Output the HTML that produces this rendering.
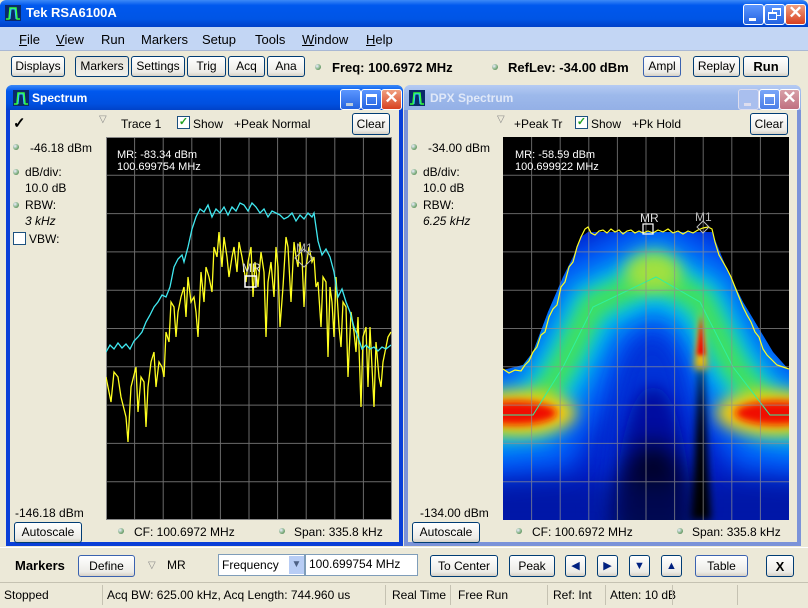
<!DOCTYPE html>
<html><head><meta charset="utf-8">
<style>
*{box-sizing:border-box;margin:0;padding:0}
body{width:808px;height:608px;overflow:hidden;background:#ece9d8;font-family:"Liberation Sans",sans-serif;font-size:12px;color:#000;position:relative}
.a{position:absolute}
.btn{position:absolute;border:1px solid #003c74;border-radius:3px;background:linear-gradient(#fff,#ecebe6 80%,#d6d0c5);font-size:12px;text-align:center;line-height:19px;height:21px}
.btn.sel{background:linear-gradient(#e4e2da,#f0efe9)}
.dot{position:absolute;width:6px;height:6px;border-radius:50%;background:radial-gradient(circle at 35% 35%,#eef,#7a7 60%,#464)}
.tb{position:absolute;height:25px;border-radius:6px 6px 0 0}
.wb{position:absolute;width:21px;height:21px;border:1px solid #fff;border-radius:3px}
</style></head><body>
<div class="a" style="left:0;top:0;width:808px;height:27px;background:linear-gradient(#3d8af7,#0058ee 20%,#0055e5 70%,#0040c8);border-radius:6px 6px 0 0"></div>
<svg class="a" style="left:5px;top:5px" width="16" height="16"><rect width="16" height="16" fill="#0a2a6a"/><path d="M1,14 L4,14 L5,3 L11,3 L12,14 L15,14" stroke="#3f3" stroke-width="1.5" fill="none"/><path d="M5,14 L6,4 L10,4 L11,14" stroke="#3cf" fill="none"/></svg>
<div class="a" style="left:26px;top:5px;color:#fff;font-weight:bold;font-size:13px">Tek RSA6100A</div>
<div class="wb" style="left:743px;top:4px;background:linear-gradient(#5b96ff,#2463e0)"><div class="a" style="left:5px;top:13px;width:7px;height:3px;background:#fff"></div></div>
<div class="wb" style="left:764px;top:4px;background:linear-gradient(#5b96ff,#2463e0)"><div class="a" style="left:7px;top:3px;width:9px;height:8px;border:1px solid #fff;border-top-width:2px"></div><div class="a" style="left:3px;top:7px;width:9px;height:8px;border:1px solid #fff;border-top-width:2px;background:#3a7af0"></div></div>
<div class="wb" style="left:785px;top:4px;background:linear-gradient(#f0a080,#d84020)"><div class="a" style="left:0;top:-2px;width:19px;color:#fff;font-weight:bold;font-size:17px;text-align:center">✕</div></div>
<div class="a" style="left:0;top:27px;width:808px;height:24px;background:#c3d6f4;border-bottom:1px solid #a9b8d4"></div>
<div class="a" style="left:19px;top:32px;font-size:13px"><u>F</u>ile</div>
<div class="a" style="left:56px;top:32px;font-size:13px"><u>V</u>iew</div>
<div class="a" style="left:101px;top:32px;font-size:13px">Run</div>
<div class="a" style="left:141px;top:32px;font-size:13px">Markers</div>
<div class="a" style="left:202px;top:32px;font-size:13px">Setup</div>
<div class="a" style="left:255px;top:32px;font-size:13px">Tools</div>
<div class="a" style="left:302px;top:32px;font-size:13px"><u>W</u>indow</div>
<div class="a" style="left:366px;top:32px;font-size:13px"><u>H</u>elp</div>
<div class="btn" style="left:11px;top:56px;width:54px">Displays</div>
<div class="btn sel" style="left:75px;top:56px;width:54px">Markers</div>
<div class="btn" style="left:131px;top:56px;width:54px">Settings</div>
<div class="btn" style="left:187px;top:56px;width:39px">Trig</div>
<div class="btn" style="left:228px;top:56px;width:37px">Acq</div>
<div class="btn" style="left:267px;top:56px;width:38px">Ana</div>
<div class="dot" style="left:315px;top:64px"></div>
<div class="a" style="left:332px;top:60px;font-weight:bold;font-size:13px">Freq: 100.6972 MHz</div>
<div class="dot" style="left:492px;top:64px"></div>
<div class="a" style="left:508px;top:60px;font-weight:bold;font-size:13px">RefLev: -34.00 dBm</div>
<div class="btn" style="left:643px;top:56px;width:38px;border-color:#3a62b0">Ampl</div>
<div class="btn" style="left:693px;top:56px;width:47px">Replay</div>
<div class="btn" style="left:743px;top:56px;width:46px;font-weight:bold;font-size:13px">Run</div>

<div class="a" style="left:6px;top:85px;width:397px;height:461px;background:#0a3fd8;border-radius:7px 7px 0 0"></div>
<div class="tb" style="left:6px;top:85px;width:397px;background:linear-gradient(#3d8af7,#0058ee 25%,#0050e0 75%,#0042c8)"></div>
<div class="a" style="left:10px;top:110px;width:389px;height:432px;background:#ece9d8"></div>
<svg class="a" style="left:13px;top:90px" width="16" height="16"><rect width="16" height="16" fill="#0a2a6a"/><path d="M1,14 L4,14 L5,3 L11,3 L12,14 L15,14" stroke="#3f3" stroke-width="1.5" fill="none"/><path d="M5,14 L6,4 L10,4 L11,14" stroke="#3cf" fill="none"/></svg>
<div class="a" style="left:32px;top:91px;color:#fff;font-weight:bold;font-size:12px">Spectrum</div>
<div class="wb" style="left:340px;top:89px;background:linear-gradient(#5b96ff,#2463e0)"><div class="a" style="left:5px;top:13px;width:7px;height:3px;background:#bcd"></div></div>
<div class="wb" style="left:361px;top:89px;background:linear-gradient(#5b96ff,#2463e0)"><div class="a" style="left:4px;top:4px;width:11px;height:11px;border:1px solid #fff;border-top-width:3px"></div></div>
<div class="wb" style="left:381px;top:89px;background:linear-gradient(#f0a080,#d84020)"><div class="a" style="left:0;top:-2px;width:19px;color:#fff;font-weight:bold;font-size:17px;text-align:center">✕</div></div>
<div class="a" style="left:13px;top:114px;font-size:15px;font-weight:bold">✓</div>
<div class="a" style="left:99px;top:114px;color:#888;font-size:10px">▽</div>
<div class="a" style="left:121px;top:117px">Trace 1</div>
<div class="a" style="left:177px;top:116px;width:13px;height:13px;border:1px solid #1c5180;background:#fff;color:#21a121;font-size:11px;line-height:11px;text-align:center;font-weight:bold">✓</div>
<div class="a" style="left:193px;top:117px">Show</div>
<div class="a" style="left:234px;top:117px">+Peak Normal</div>
<div class="btn" style="left:352px;top:113px;width:38px;height:22px;line-height:20px">Clear</div>
<div class="dot" style="left:13px;top:144px"></div><div class="a" style="left:30px;top:141px">-46.18 dBm</div>
<div class="dot" style="left:13px;top:169px"></div><div class="a" style="left:25px;top:165px">dB/div:</div>
<div class="a" style="left:25px;top:181px">10.0 dB</div>
<div class="dot" style="left:13px;top:202px"></div><div class="a" style="left:25px;top:198px">RBW:</div>
<div class="a" style="left:25px;top:214px;font-style:italic">3 kHz</div>
<div class="a" style="left:13px;top:232px;width:13px;height:13px;border:1px solid #1c5180;background:#fff"></div><div class="a" style="left:29px;top:232px">VBW:</div>
<div class="a" style="left:15px;top:506px">-146.18 dBm</div>
<div class="btn" style="left:14px;top:522px;width:68px">Autoscale</div>
<div class="dot" style="left:118px;top:528px"></div><div class="a" style="left:134px;top:525px">CF: 100.6972 MHz</div>
<div class="dot" style="left:279px;top:528px"></div><div class="a" style="left:294px;top:525px">Span: 335.8 kHz</div>
<svg class="a" style="left:106px;top:137px" width="286" height="383">
<rect width="286" height="383" fill="#000"/>
<g stroke="#6a6a6a" stroke-width="1">
<path d="M28.6,0V383M57.2,0V383M85.8,0V383M114.4,0V383M143,0V383M171.6,0V383M200.2,0V383M228.8,0V383M257.4,0V383M0,38.3H286M0,76.6H286M0,114.9H286M0,153.2H286M0,191.5H286M0,229.8H286M0,268.1H286M0,306.4H286M0,344.7H286"/></g>
<rect x="0.5" y="0.5" width="285" height="382" fill="none" stroke="#888"/>
<path fill="none" stroke="#ffff20" stroke-width="1.3" d="M0,240 5,265 8,235 12,240 15,260 20,280 22,305 25,250 30,230 32,275 35,240 38,245 40,290 42,250 45,225 48,215 50,250 53,225 56,230 58,240 60,195 63,205 65,165 68,170 70,200 72,175 75,160 78,150 80,180 82,140 85,165 88,160 90,175 92,200 95,135 98,165 100,130 103,140 106,155 108,110 111,120 113,95 116,130 118,100 121,120 123,140 126,120 128,110 131,135 133,105 136,120 140,145 142,125 145,110 147,160 149,125 152,150 155,115 158,135 160,200 162,145 165,125 168,160 170,110 172,130 174,190 177,150 180,100 182,110 185,165 188,105 190,120 192,130 194,105 196,120 198,170 200,130 203,110 206,125 208,120 210,150 212,145 215,190 217,140 220,145 222,220 224,150 226,165 228,200 230,140 233,190 235,210 237,165 240,170 242,240 245,175 248,195 250,215 252,180 255,270 257,200 260,190 262,250 264,190 266,230 268,270 270,205 273,240 275,250 277,225 280,210 282,200 285,195"/>
<path fill="none" stroke="#40e8f0" stroke-width="1.3" d="M0,215 4,208 8,212 12,206 16,211 20,207 24,212 28,204 32,200 36,195 40,185 44,178 48,170 52,165 56,158 60,160 64,150 68,130 72,122 76,118 78,125 82,110 86,92 90,80 94,72 98,75 102,68 106,80 110,72 114,76 118,70 122,78 126,70 130,74 134,66 138,68 142,74 146,66 150,70 154,76 158,72 162,80 166,74 170,76 174,78 178,82 182,80 186,76 190,84 194,78 198,82 202,76 206,80 208,76 210,90 212,104 216,118 220,112 224,120 228,135 232,160 236,152 240,165 244,175 248,190 252,200 256,212 260,208 264,212 268,210 272,214 276,210 280,212 285,208"/>
<rect x="139" y="139" width="11" height="11" fill="none" stroke="#fff" stroke-width="1.5"/>
<text x="136" y="135" fill="#ddd" font-size="12" font-family="Liberation Sans">MR</text>
<path d="M198,112 L207,121 L198,130 L189,121Z" fill="none" stroke="#bbb"/>
<text x="190" y="115" fill="#aaa" font-size="12" font-family="Liberation Sans">M1</text>
<text x="11" y="21" fill="#fff" font-size="11" font-family="Liberation Sans">MR: -83.34 dBm</text>
<text x="11" y="33" fill="#fff" font-size="11" font-family="Liberation Sans">100.699754 MHz</text>
</svg>

<div class="a" style="left:404px;top:85px;width:397px;height:461px;background:#7b93d9;border-radius:7px 7px 0 0"></div>
<div class="tb" style="left:404px;top:85px;width:397px;background:linear-gradient(#b5cbf3,#9db9eb 40%,#94b0e6)"></div>
<div class="a" style="left:408px;top:110px;width:389px;height:432px;background:#ece9d8"></div>
<svg class="a" style="left:409px;top:90px" width="16" height="16"><rect width="16" height="16" fill="#0a2a6a"/><path d="M1,14 L4,14 L5,3 L11,3 L12,14 L15,14" stroke="#3f3" stroke-width="1.5" fill="none"/><path d="M5,14 L6,4 L10,4 L11,14" stroke="#3cf" fill="none"/></svg>
<div class="a" style="left:430px;top:91px;color:#e0e8f8;font-weight:bold;font-size:12px">DPX Spectrum</div>
<div class="wb" style="left:738px;top:89px;background:#a9bfee;border-color:#dde"><div class="a" style="left:5px;top:13px;width:7px;height:3px;background:#dde"></div></div>
<div class="wb" style="left:759px;top:89px;background:linear-gradient(#7aa6f8,#4b7fe8)"><div class="a" style="left:4px;top:4px;width:11px;height:11px;border:1px solid #fff;border-top-width:3px"></div></div>
<div class="wb" style="left:779px;top:89px;background:linear-gradient(#d8a0a8,#c07080)"><div class="a" style="left:0;top:-2px;width:19px;color:#fff;font-weight:bold;font-size:17px;text-align:center">✕</div></div>
<div class="a" style="left:497px;top:114px;color:#888;font-size:10px">▽</div>
<div class="a" style="left:514px;top:117px">+Peak Tr</div>
<div class="a" style="left:575px;top:116px;width:13px;height:13px;border:1px solid #1c5180;background:#fff;color:#21a121;font-size:11px;line-height:11px;text-align:center;font-weight:bold">✓</div>
<div class="a" style="left:591px;top:117px">Show</div>
<div class="a" style="left:632px;top:117px">+Pk Hold</div>
<div class="btn" style="left:750px;top:113px;width:38px;height:22px;line-height:20px">Clear</div>
<div class="dot" style="left:411px;top:144px"></div><div class="a" style="left:428px;top:141px">-34.00 dBm</div>
<div class="dot" style="left:411px;top:169px"></div><div class="a" style="left:423px;top:165px">dB/div:</div>
<div class="a" style="left:423px;top:181px">10.0 dB</div>
<div class="dot" style="left:411px;top:202px"></div><div class="a" style="left:423px;top:198px">RBW:</div>
<div class="a" style="left:423px;top:214px;font-style:italic">6.25 kHz</div>
<div class="a" style="left:420px;top:506px">-134.00 dBm</div>
<div class="btn" style="left:412px;top:522px;width:68px">Autoscale</div>
<div class="dot" style="left:516px;top:528px"></div><div class="a" style="left:532px;top:525px">CF: 100.6972 MHz</div>
<div class="dot" style="left:677px;top:528px"></div><div class="a" style="left:692px;top:525px">Span: 335.8 kHz</div>
<svg class="a" style="left:503px;top:137px" width="286" height="383">
<defs>
<clipPath id="env"><path d="M0,233 L20,228 30,215 45,175 60,140 70,120 78,100 85,95 209,95 215,110 225,135 240,165 255,190 270,215 286,233 L286,383 L0,383Z"/></clipPath>
<filter id="b8" filterUnits="userSpaceOnUse" x="-100" y="-100" width="486" height="583"><feGaussianBlur stdDeviation="8"/></filter>
<filter id="b12" filterUnits="userSpaceOnUse" x="-100" y="-100" width="486" height="583"><feGaussianBlur stdDeviation="12"/></filter>
<filter id="b4" filterUnits="userSpaceOnUse" x="-100" y="-100" width="486" height="583"><feGaussianBlur stdDeviation="4"/></filter>
<filter id="b2" filterUnits="userSpaceOnUse" x="-100" y="-100" width="486" height="583"><feGaussianBlur stdDeviation="2"/></filter>
</defs>
<rect width="286" height="383" fill="#000"/>
<g clip-path="url(#env)">
<rect width="286" height="383" fill="#0020c8"/>
<path d="M-30,285 L30,278 60,230 90,170 153,140 197,165 230,230 267,278 316,285" fill="none" stroke="#0058f8" stroke-width="120" filter="url(#b12)"/>
<path d="M-30,285 L30,278 60,230 90,170 153,140 197,165 230,230 267,278 316,285" fill="none" stroke="#00c0f0" stroke-width="60" filter="url(#b12)"/>
<path d="M-30,282 L30,276 60,228 90,168 153,138 197,163 230,228 267,276 316,282" fill="none" stroke="#40e060" stroke-width="28" filter="url(#b8)"/>
<ellipse cx="150" cy="135" rx="28" ry="20" fill="#a0e040" filter="url(#b8)"/>
<path d="M100,383 Q108,195 150,195 Q190,195 198,383Z" fill="#0030d8" filter="url(#b12)"/>
<path d="M110,383 Q120,250 150,250 Q180,250 190,383Z" fill="#0010a0" filter="url(#b8)"/>
<ellipse cx="150" cy="400" rx="40" ry="95" fill="#000" opacity="0.75" filter="url(#b12)"/>
<rect x="-50" y="345" width="386" height="60" fill="#000a80" opacity="0.45" filter="url(#b12)"/>
<ellipse cx="18" cy="276" rx="55" ry="22" fill="#ffd000" filter="url(#b8)"/>
<ellipse cx="268" cy="276" rx="55" ry="22" fill="#ffd000" filter="url(#b8)"/>
<ellipse cx="12" cy="276" rx="42" ry="12" fill="#f01000" filter="url(#b4)"/>
<ellipse cx="274" cy="276" rx="42" ry="12" fill="#f01000" filter="url(#b4)"/>
<path d="M198,205 L188,383 L208,383Z" fill="#000" filter="url(#b4)"/>
<path d="M198,172 L191,232 L205,232Z" fill="#ffc000" filter="url(#b4)"/>
<path d="M198,178 L194,218 L202,218Z" fill="#f00000" filter="url(#b2)"/>
</g>
<path fill="none" stroke="#30f0a0" stroke-width="1" d="M0,278 30,278 60,230 90,170 153,140 197,165 230,230 267,278 286,278"/>
<g stroke="#909090" stroke-width="1" opacity="0.7">
<path d="M28.6,0V383M57.2,0V383M85.8,0V383M114.4,0V383M143,0V383M171.6,0V383M200.2,0V383M228.8,0V383M257.4,0V383M0,38.3H286M0,76.6H286M0,114.9H286M0,153.2H286M0,191.5H286M0,229.8H286M0,268.1H286M0,306.4H286M0,344.7H286"/></g>
<path fill="none" stroke="#ffff20" stroke-width="1.2" d="M0,232 6,236 12,233 18,234 22,228 26,224 30,215 34,210 38,198 42,195 46,180 50,172 54,168 58,150 62,145 66,130 70,125 74,110 78,100 82,92 85,90 88,96 92,98 96,94 100,93 104,96 108,92 112,95 116,93 120,97 124,94 128,93 132,96 136,94 140,96 145,94 150,96 155,93 160,95 165,92 170,96 175,94 180,97 185,94 190,96 195,93 200,91 205,90 209,92 212,105 216,118 220,125 224,132 228,140 232,150 236,160 240,170 244,178 248,185 252,195 256,200 260,212 264,218 268,222 274,228 280,230 286,232"/>
<rect x="140" y="87" width="10" height="10" fill="none" stroke="#fff" stroke-width="1.2"/>
<text x="137" y="85" fill="#ddd" font-size="12" font-family="Liberation Sans">MR</text>
<path d="M200,84 L206,90 L200,96 L194,90Z" fill="none" stroke="#bbb"/>
<text x="192" y="84" fill="#bbb" font-size="12" font-family="Liberation Sans">M1</text>
<text x="12" y="21" fill="#fff" font-size="11" font-family="Liberation Sans">MR: -58.59 dBm</text>
<text x="12" y="33" fill="#fff" font-size="11" font-family="Liberation Sans">100.699922 MHz</text>
</svg>

<div class="a" style="left:0;top:547px;width:808px;height:1px;background:#fff"></div>
<div class="a" style="left:15px;top:558px;font-weight:bold;font-size:13px">Markers</div>
<div class="btn" style="left:78px;top:555px;width:57px;height:22px;line-height:21px;border-color:#3a62b0">Define</div>
<div class="a" style="left:148px;top:560px;color:#888;font-size:10px">▽</div>
<div class="a" style="left:167px;top:558px">MR</div>
<div class="a" style="left:218px;top:554px;width:87px;height:22px;border:1px solid #7f9db9;background:#fff"></div>
<div class="a" style="left:222px;top:558px">Frequency</div>
<div class="a" style="left:289px;top:556px;width:15px;height:18px;background:#b8cdf5;color:#4d6185;font-size:10px;text-align:center;line-height:18px">▼</div>
<div class="a" style="left:305px;top:554px;width:113px;height:22px;border:1px solid #7f9db9;background:#fff"></div>
<div class="a" style="left:309px;top:557px">100.699754 MHz</div>
<div class="btn" style="left:430px;top:555px;width:68px;height:22px;line-height:21px">To Center</div>
<div class="btn" style="left:509px;top:555px;width:46px;height:22px;line-height:21px">Peak</div>
<div class="btn" style="left:565px;top:555px;width:21px;height:22px;line-height:21px;color:#002080;font-size:11px">◀</div>
<div class="btn" style="left:597px;top:555px;width:21px;height:22px;line-height:21px;color:#002080;font-size:11px">▶</div>
<div class="btn" style="left:629px;top:555px;width:21px;height:22px;line-height:21px;color:#002080;font-size:11px">▼</div>
<div class="btn" style="left:661px;top:555px;width:21px;height:22px;line-height:21px;color:#002080;font-size:11px">▲</div>
<div class="btn" style="left:695px;top:555px;width:53px;height:22px;line-height:21px;border-color:#3a62b0">Table</div>
<div class="btn" style="left:766px;top:555px;width:28px;height:22px;line-height:21px;font-weight:bold;font-size:13px">X</div>
<div class="a" style="left:0;top:582px;width:808px;height:1px;background:#c5c2b2"></div>
<div class="a" style="left:4px;top:588px">Stopped</div>
<div class="a" style="left:102px;top:585px;width:1px;height:20px;background:#c5c2b2"></div>
<div class="a" style="left:107px;top:588px">Acq BW: 625.00 kHz, Acq Length: 744.960 us</div>
<div class="a" style="left:385px;top:585px;width:1px;height:20px;background:#c5c2b2"></div>
<div class="a" style="left:392px;top:588px">Real Time</div>
<div class="a" style="left:450px;top:585px;width:1px;height:20px;background:#c5c2b2"></div>
<div class="a" style="left:458px;top:588px">Free Run</div>
<div class="a" style="left:547px;top:585px;width:1px;height:20px;background:#c5c2b2"></div>
<div class="a" style="left:553px;top:588px">Ref: Int</div>
<div class="a" style="left:605px;top:585px;width:1px;height:20px;background:#c5c2b2"></div>
<div class="a" style="left:610px;top:588px">Atten: 10 dB</div>
<div class="a" style="left:672px;top:585px;width:1px;height:20px;background:#c5c2b2"></div>
<div class="a" style="left:737px;top:585px;width:1px;height:20px;background:#c5c2b2"></div>
</body></html>
